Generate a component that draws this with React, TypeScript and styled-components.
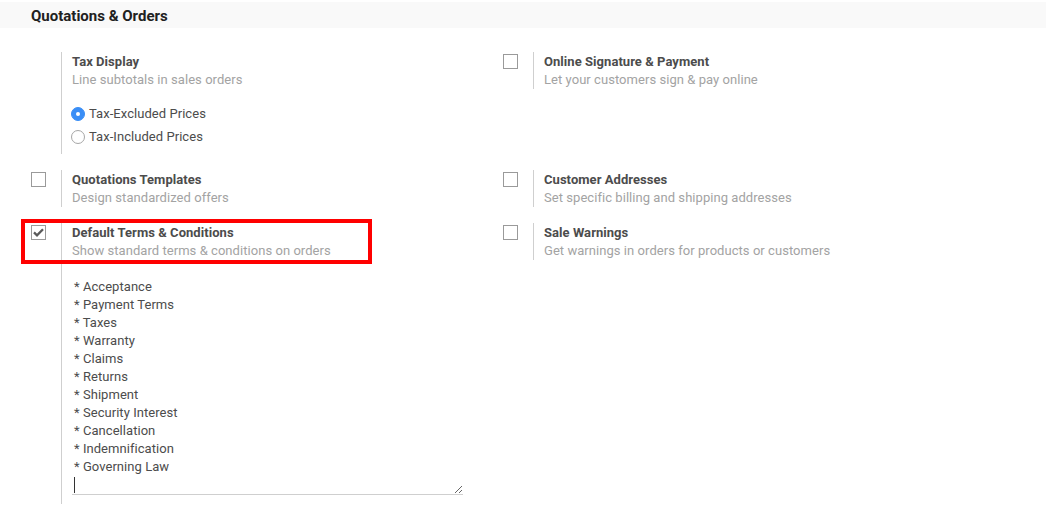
import React, { useState } from "react";
import styled, { createGlobalStyle } from "styled-components";

const GlobalStyle = createGlobalStyle`
  body {
    margin: 0;
    background: #fff;
    font-family: Roboto, "Liberation Sans", sans-serif;
    color: #4c4c4c;
  }
`;

const SectionHeader = styled.h2`
  margin: 2px 1px 0 0;
  height: 26px;
  box-sizing: border-box;
  padding: 1px 0 0 31px;
  line-height: 26px;
  background: #f9f9f9;
  font-size: 15px;
  font-weight: 700;
  color: #212121;
`;

const SettingsGrid = styled.div`
  display: grid;
  grid-template-columns: 472px 472px;
  align-items: start;
  row-gap: 16px;
  padding: 24px 0 0 22px;
`;

const Setting = styled.div`
  position: relative;
  display: flex;
`;

const CheckCell = styled.div`
  width: 39px;
  padding: 2px 0 0 9px;
  box-sizing: border-box;
  flex-shrink: 0;
`;

const Box = styled.span`
  display: flex;
  align-items: center;
  justify-content: center;
  width: 15px;
  height: 15px;
  box-sizing: border-box;
  border: 1px solid #9a9a9a;
  background: #fff;
  cursor: pointer;
`;

const Pane = styled.div<{ $bottom?: number }>`
  flex: 1;
  border-left: 1px solid #cfcfcf;
  padding: 1px 0 ${(p) => p.$bottom ?? 0}px 10px;
  font-size: 13px;
  line-height: 18px;
  letter-spacing: 0.05px;
`;

const Title = styled.div`
  font-weight: 700;
  color: #4c4c4c;
`;

const Hint = styled.div`
  color: #a3a3a3;
`;

const RadioList = styled.div`
  margin-top: 13px;
  display: flex;
  flex-direction: column;
`;

const RadioRow = styled.label`
  display: flex;
  align-items: center;
  gap: 4px;
  height: 23px;
  margin-left: -1px;
  color: #4c4c4c;
  cursor: pointer;
`;

const RadioDot = styled.span<{ $on: boolean }>`
  width: 14px;
  height: 14px;
  box-sizing: border-box;
  border-radius: 50%;
  border: 1px solid ${(p) => (p.$on ? "#3a8ef6" : "#a6a6a6")};
  background: ${(p) => (p.$on ? "#3a8ef6" : "#fff")};
  display: flex;
  align-items: center;
  justify-content: center;

  &::after {
    content: "";
    width: 4px;
    height: 4px;
    border-radius: 50%;
    background: ${(p) => (p.$on ? "#fff" : "transparent")};
  }
`;

const TermsWrap = styled.div`
  position: relative;
  margin-top: 18px;
  width: 391px;
`;

const Terms = styled.textarea`
  display: block;
  width: 100%;
  height: 217px;
  box-sizing: border-box;
  padding: 0 2px;
  border: none;
  border-bottom: 1px solid #cfcfcf;
  outline: none;
  overflow: hidden;
  font-family: Roboto, "Liberation Sans", sans-serif;
  font-size: 13px;
  line-height: 18px;
  letter-spacing: 0.05px;
  color: #4c4c4c;
  background: transparent;
`;

// the text cursor sitting on the last, empty line
const Caret = styled.span`
  position: absolute;
  left: 2px;
  bottom: 2px;
  width: 1px;
  height: 16px;
  background: #333;
  pointer-events: none;
`;

const Highlight = styled.div`
  position: absolute;
  left: -1px;
  top: -4px;
  width: 351px;
  height: 45px;
  box-sizing: border-box;
  border: 4px solid #ff0000;
  pointer-events: none;
`;

const Check = () => (
  <svg width="11" height="9" viewBox="0 0 11 9">
    <path d="M1 4.4 L4 7.3 L10 1.2" fill="none" stroke="#5a5a5a" strokeWidth="2.3" />
  </svg>
);

type CheckboxProps = { checked: boolean; onToggle: () => void };

const Checkbox = ({ checked, onToggle }: CheckboxProps) => (
  <CheckCell>
    <Box onClick={onToggle}>{checked && <Check />}</Box>
  </CheckCell>
);

const TERMS_TEXT =
  [
    "Acceptance",
    "Payment Terms",
    "Taxes",
    "Warranty",
    "Claims",
    "Returns",
    "Shipment",
    "Security Interest",
    "Cancellation",
    "Indemnification",
    "Governing Law",
  ]
    .map((t) => "* " + t)
    .join("\n") + "\n";

const App = () => {
  const [flags, setFlags] = useState<Record<string, boolean>>({
    signature: false,
    templates: false,
    addresses: false,
    terms: true,
    warnings: false,
  });
  const [tax, setTax] = useState<"excluded" | "included">("excluded");
  const [terms, setTerms] = useState(TERMS_TEXT);
  const [editing, setEditing] = useState(false);

  const toggle = (key: string) => setFlags((f) => ({ ...f, [key]: !f[key] }));

  return (
    <>
      <GlobalStyle />
      <SectionHeader>Quotations &amp; Orders</SectionHeader>
      <SettingsGrid>
        <Setting>
          <CheckCell />
          <Pane $bottom={6}>
            <Title>Tax Display</Title>
            <Hint>Line subtotals in sales orders</Hint>
            <RadioList>
              <RadioRow onClick={() => setTax("excluded")}>
                <RadioDot $on={tax === "excluded"} />
                Tax-Excluded Prices
              </RadioRow>
              <RadioRow onClick={() => setTax("included")}>
                <RadioDot $on={tax === "included"} />
                Tax-Included Prices
              </RadioRow>
            </RadioList>
          </Pane>
        </Setting>

        <Setting>
          <Checkbox checked={flags.signature} onToggle={() => toggle("signature")} />
          <Pane>
            <Title>Online Signature &amp; Payment</Title>
            <Hint>Let your customers sign &amp; pay online</Hint>
          </Pane>
        </Setting>

        <Setting>
          <Checkbox checked={flags.templates} onToggle={() => toggle("templates")} />
          <Pane>
            <Title>Quotations Templates</Title>
            <Hint>Design standardized offers</Hint>
          </Pane>
        </Setting>

        <Setting>
          <Checkbox checked={flags.addresses} onToggle={() => toggle("addresses")} />
          <Pane>
            <Title>Customer Addresses</Title>
            <Hint>Set specific billing and shipping addresses</Hint>
          </Pane>
        </Setting>

        <Setting>
          <Highlight />
          <Checkbox checked={flags.terms} onToggle={() => toggle("terms")} />
          <Pane $bottom={9}>
            <Title>Default Terms &amp; Conditions</Title>
            <Hint>Show standard terms &amp; conditions on orders</Hint>
            <TermsWrap>
              <Terms
                value={terms}
                onChange={(e) => setTerms(e.target.value)}
                onFocus={() => setEditing(true)}
              />
              {!editing && <Caret />}
            </TermsWrap>
          </Pane>
        </Setting>

        <Setting>
          <Checkbox checked={flags.warnings} onToggle={() => toggle("warnings")} />
          <Pane>
            <Title>Sale Warnings</Title>
            <Hint>Get warnings in orders for products or customers</Hint>
          </Pane>
        </Setting>
      </SettingsGrid>
    </>
  );
};

export default App;
